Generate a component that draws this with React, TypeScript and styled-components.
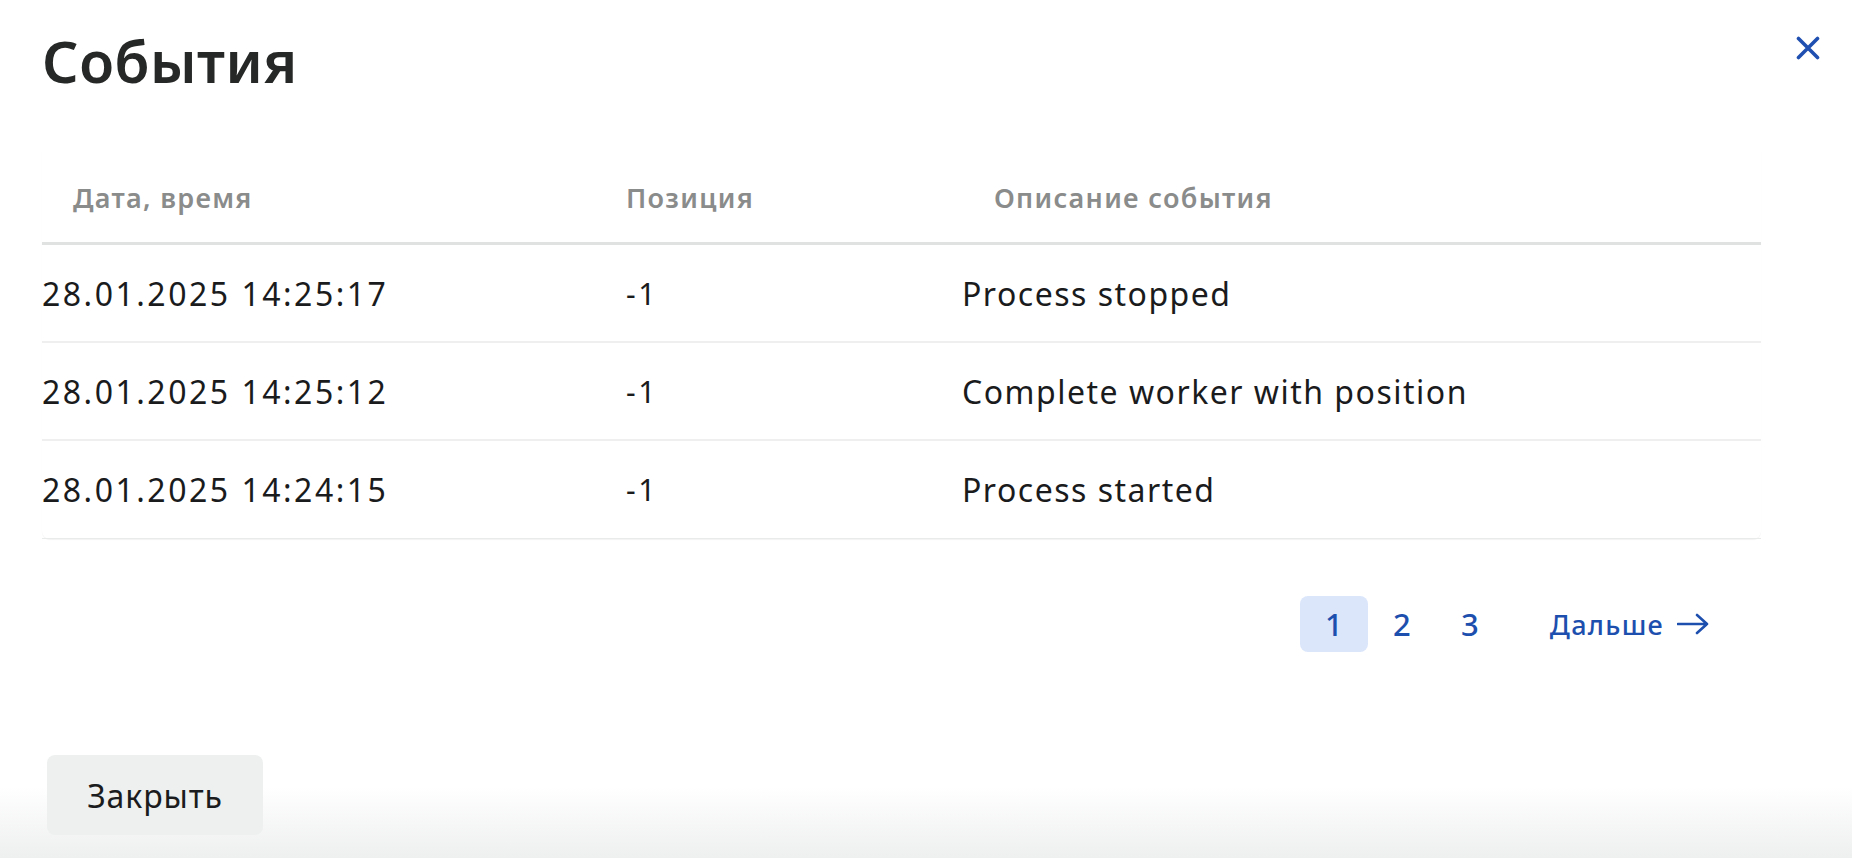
import React from "react";
import styled, { createGlobalStyle } from "styled-components";

const Global = createGlobalStyle`
  html, body { margin: 0; padding: 0; background: #ffffff; }
  body { font-family: "Noto Sans", "Open Sans", sans-serif; color: #1b1c1d; }
  * { box-sizing: border-box; }
`;

const Page = styled.div`
  min-height: 100vh;
  display: flex;
  flex-direction: column;
  background: #ffffff;
`;

const Content = styled.main`
  flex: 1;
  display: flex;
  flex-direction: column;
  padding: 28px 32px 0 42px;
`;

const TitleBar = styled.header`
  display: flex;
  justify-content: space-between;
  align-items: flex-start;
`;

const Title = styled.h1`
  margin: 0;
  font-size: 57px;
  line-height: 67px;
  font-weight: 600;
  letter-spacing: 0.5px;
  color: #262828;
`;

const CloseButton = styled.button`
  border: 0;
  background: none;
  padding: 0;
  margin-top: 8px;
  width: 24px;
  height: 24px;
  display: flex;
  color: #1f4fb0;
  cursor: pointer;
`;

const Table = styled.div`
  margin: 57px 59px 0 0;
  border-radius: 0 0 8px 8px;
  box-shadow: 0 1px 1px rgba(0, 0, 0, 0.05);
`;

const COLS = "584px 336px 1fr";

const HeadRow = styled.div`
  display: grid;
  grid-template-columns: ${COLS};
  align-items: center;
  height: 93px;
  border-bottom: 3px solid #e0e1e1;
`;

const HeadCell = styled.div<{ $pad: number }>`
  padding-left: ${(p) => p.$pad}px;
  font-size: 27px;
  font-weight: 600;
  letter-spacing: 1.3px;
  color: #8a8b8b;
`;

const Row = styled.div`
  display: grid;
  grid-template-columns: ${COLS};
  align-items: center;
  height: 98px;
  border-bottom: 2px solid #efefef;
  &:last-child {
    border-bottom: 1px solid #e9eaea;
  }
`;

const Cell = styled.div<{ $wide?: boolean }>`
  font-size: 32px;
  letter-spacing: ${(p) => (p.$wide ? 2.5 : 1.5)}px;
  color: #1a1b1c;
`;

const PosCell = styled.div`
  font-size: 30px;
  letter-spacing: 2.5px;
  color: #1a1b1c;
`;

const Pager = styled.nav`
  display: flex;
  justify-content: flex-end;
  align-items: center;
  margin: 57px 111px 0 0;
`;

const PageBtn = styled.button<{ $active?: boolean }>`
  width: 68px;
  height: 56px;
  border: 0;
  border-radius: 8px;
  background: ${(p) => (p.$active ? "#dbe6fb" : "transparent")};
  color: #1d4fae;
  font-family: inherit;
  font-size: 31px;
  font-weight: 500;
  cursor: pointer;
  display: flex;
  align-items: center;
  justify-content: center;
`;

const NextLink = styled.a`
  margin-left: 46px;
  display: flex;
  align-items: center;
  gap: 13px;
  color: #1d4fae;
  font-size: 27px;
  font-weight: 500;
  letter-spacing: 1.3px;
  text-decoration: none;
  cursor: pointer;
`;

const Footer = styled.footer`
  height: 158px;
  padding: 55px 0 23px 47px;
  background: linear-gradient(180deg, #ffffff 0%, #ffffff 55%, #eeefef 100%);
`;

const CloseAction = styled.button`
  width: 216px;
  height: 80px;
  border: 0;
  border-radius: 8px;
  background: #eef0f0;
  color: #1b1c1d;
  font-family: inherit;
  font-size: 32px;
  letter-spacing: 0.9px;
  cursor: pointer;
`;

const events = [
  { date: "28.01.2025 14:25:17", pos: "-1", desc: "Process stopped" },
  { date: "28.01.2025 14:25:12", pos: "-1", desc: "Complete worker with position" },
  { date: "28.01.2025 14:24:15", pos: "-1", desc: "Process started" },
];

export default function App() {
  return (
    <Page>
      <Global />
      <Content>
        <TitleBar>
          <Title>События</Title>
          <CloseButton aria-label="Закрыть">
            <svg width="24" height="24" viewBox="0 0 24 24">
              <path
                d="M2.5 2.5L21.5 21.5M21.5 2.5L2.5 21.5"
                stroke="currentColor"
                strokeWidth="3.6"
                strokeLinecap="round"
              />
            </svg>
          </CloseButton>
        </TitleBar>
        <Table>
          <HeadRow>
            <HeadCell $pad={31}>Дата, время</HeadCell>
            <HeadCell $pad={0}>Позиция</HeadCell>
            <HeadCell $pad={32}>Описание события</HeadCell>
          </HeadRow>
          {events.map((e) => (
            <Row key={e.date}>
              <Cell $wide>{e.date}</Cell>
              <PosCell>{e.pos}</PosCell>
              <Cell>{e.desc}</Cell>
            </Row>
          ))}
        </Table>
        <Pager>
          <PageBtn $active>1</PageBtn>
          <PageBtn>2</PageBtn>
          <PageBtn>3</PageBtn>
          <NextLink>
            Дальше
            <svg width="32" height="22" viewBox="0 0 32 22">
              <path
                d="M1 11H30M20 2L30 11L20 20"
                stroke="currentColor"
                strokeWidth="2.6"
                fill="none"
                strokeLinecap="round"
                strokeLinejoin="round"
              />
            </svg>
          </NextLink>
        </Pager>
      </Content>
      <Footer>
        <CloseAction>Закрыть</CloseAction>
      </Footer>
    </Page>
  );
}
